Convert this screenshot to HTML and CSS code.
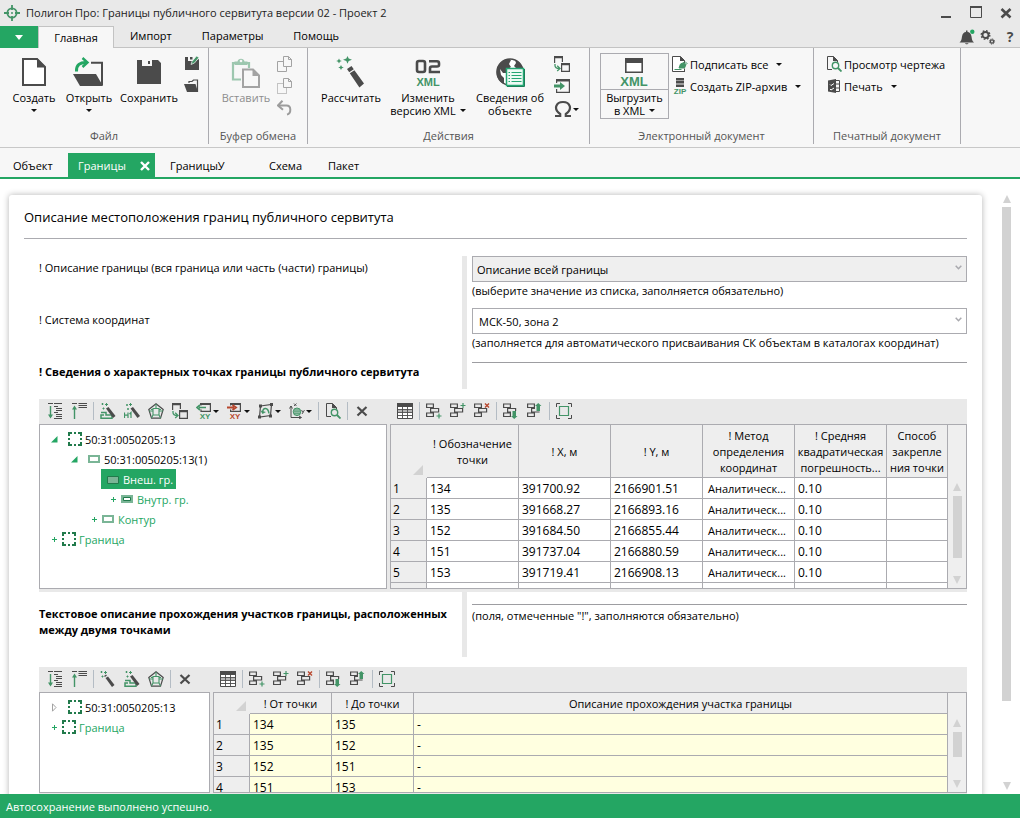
FILE: index.html
```html
<!DOCTYPE html>
<html lang="ru">
<head>
<meta charset="utf-8">
<title>Полигон Про: Границы публичного сервитута версии 02 - Проект 2</title>
<link rel="stylesheet" href="styles.css">
</head>
<body>
<svg class="sprite" aria-hidden="true">
  <symbol id="i-logo" viewBox="0 0 16 16"><circle cx="8" cy="8" r="4.6" fill="none" stroke="#439467" stroke-width="1.8"/><path d="M8 0v5M8 11v5M0 8h5M11 8h5" stroke="#439467" stroke-width="1.8"/><circle cx="8" cy="8" r="1" fill="#439467"/></symbol>
  <symbol id="i-min" viewBox="0 0 16 16"><path d="M3 11h10v2H3z" fill="#4b4b4b"/></symbol>
  <symbol id="i-max" viewBox="0 0 16 16"><path d="M2.500 1.500h11v11h-11z" fill="none" stroke="#4b4b4b"/><path d="M2 1h12v2H2z" fill="#4b4b4b"/></symbol>
  <symbol id="i-close" viewBox="0 0 16 16"><path d="M3.500 4l9 8.500M12.500 4l-9 8.500" stroke="#4b4b4b" stroke-width="2.600"/></symbol>
  <symbol id="i-bell" viewBox="0 0 16 16"><path d="M0.500 13.500c2-2 2-3 2.500-6 .5-3 2-4.500 4-4.500V1.500h1.500V3c2 0 3.500 1.500 4 4.500.5 3 .5 4 2.500 6zM6 14.200h3.500c-.5 1.500-3 1.500-3.500 0z" fill="#4b4b4b"/><circle cx="13.300" cy="2.700" r="2.200" fill="#24a663"/></symbol>
  <symbol id="i-gears" viewBox="0 0 16 16"><g fill="none" stroke="#4b4b4b"><circle cx="5.500" cy="6" r="3" stroke-width="1.800"/><circle cx="5.500" cy="6" r="4.300" stroke-width="1.400" stroke-dasharray="1.700 1.677"/><circle cx="12" cy="12.500" r="1.600" stroke-width="1.300"/><circle cx="12" cy="12.500" r="2.600" stroke-width="1" stroke-dasharray="1 1.040"/></g></symbol>

  <symbol id="i-new" viewBox="0 0 32 32"><path d="M5 3h14l8 8v18H5z" fill="#fff" stroke="#4b4b4b" stroke-width="2"/><path d="M19 2v9.500h9z" fill="#4b4b4b"/></symbol>
  <symbol id="i-open" viewBox="0 0 32 32"><path d="M18 6.700h11V29" fill="none" stroke="#4b4b4b" stroke-width="2"/><path d="M0 18h23l7 12H7z" fill="#4b4b4b"/><path d="M3.500 15.500C3 9 7 6 14 6.500" fill="none" stroke="#24a663" stroke-width="3"/><path d="M9.500 2l5 4.500-5 4.500" fill="none" stroke="#24a663" stroke-width="2.400"/></symbol>
  <symbol id="i-save" viewBox="0 0 32 32"><path d="M4 4h5v6h10V4h6l3 3v21H4z" fill="#4b4b4b"/><path d="M14 4h5v5h-5z" fill="#f7f7f7"/><path d="M15 5h2v3h-2z" fill="#4b4b4b"/></symbol>
  <symbol id="i-saveas" viewBox="0 0 16 16"><path d="M1 1h3v4h7l4-2v11H1zM6 1h2.500v2.500H6z" fill="#4b4b4b"/><path d="M7 8.500l1-3L12.500 0 15 1.500 10.500 7z" fill="#439467" stroke="#f7f7f7" stroke-width=".7"/></symbol>
  <symbol id="i-folder" viewBox="0 0 16 16"><path d="M5 5V3.500h3l1.500-1.500h4v12" fill="none" stroke="#4b4b4b" stroke-width="1.200"/><path d="M0 6h11.500l2.500 8H3z" fill="#4b4b4b"/></symbol>
  <symbol id="i-paste" viewBox="0 0 32 32"><path d="M11 23.500H3V7h16v5" fill="none" stroke="#9dc7af" stroke-width="2.200"/><path d="M4.500 9V5.500h3a3.600 3.600 0 0 1 7 0h3V9z" fill="#9dc7af"/><circle cx="11" cy="5" r="1.300" fill="#f7f7f7"/><path d="M13 13.500h10l6 6V31H13z" fill="#f7f7f7" stroke="#a3a3a3" stroke-width="2"/><path d="M22.500 13v7H30z" fill="#a3a3a3"/></symbol>
  <symbol id="i-copy" viewBox="0 0 16 16"><path d="M.5 5.500h9v10h-9z" fill="none" stroke="#a3a3a3"/><path d="M6.500.5h5l3 3v7h-8z" fill="#f7f7f7" stroke="#a3a3a3"/><path d="M11.500.5v3h3" fill="none" stroke="#a3a3a3"/></symbol>
  <symbol id="i-cut" viewBox="0 0 16 16"><path d="M.5 5.500h9v10h-9z" fill="none" stroke="#8f8f8f" stroke-dasharray="1 1"/><path d="M6.500.5h5l3 3v6h-8z" fill="#f7f7f7" stroke="#a3a3a3"/><path d="M11.500.5v3h3" fill="none" stroke="#a3a3a3"/></symbol>
  <symbol id="i-undo" viewBox="0 0 16 16"><path d="M2 5.500h7.500c5 0 5 8 .5 9" fill="none" stroke="#9c9c9c" stroke-width="2"/><path d="M5.500.8L1 5.500l5 4.200" fill="none" stroke="#9c9c9c" stroke-width="2"/></symbol>
  <symbol id="i-wand" viewBox="0 0 32 32"><path d="M12 13l4.500-3 2.300 3.200-4.600 3zM14.800 17.200l4.600-3 9.600 13.300-4.600 4z" fill="#4b4b4b"/><path d="M12.500 0l1.200 2.600 3.300 1.200-3.300 1.200-1.200 2.700-1.200-2.700L8 3.800l3.300-1.200zM4 2.500l.9 1.700 1.900.8-1.900.8L4 7.500l-.9-1.700L1.200 5l1.900-.8zM6 9l.9 1.800 1.900.7-1.900.8L6 14l-.9-1.700-1.900-.8 1.900-.7z" fill="#439467"/></symbol>
  <symbol id="i-version" viewBox="0 0 32 32"><path d="M7 5h4q2 0 2 2v7q0 2-2 2H7q-2 0-2-2V7q0-2 2-2zM17 5.200h8q2 0 2 2v1.800q0 1.500-2 1.500h-5q-2 0-2 2V16h10" fill="none" stroke="#4b4b4b" stroke-width="2.600"/><text x="16" y="30" text-anchor="middle" class="ic-xml">XML</text></symbol>
  <symbol id="i-globe" viewBox="0 0 32 32"><circle cx="16" cy="16" r="13" fill="#fff" stroke="#4b4b4b" stroke-width="1.500"/><path d="M9 5c4-3 7-2 8-1l-2 4 2 3-3 2-1 4H9l-3-4 1 6 3 3v6C3 25 2 18 3 13c1-4 3-6 6-8zM21 4c4 1 7 5 8 9h-6l-3-3 2-3z" fill="#4b4b4b"/><path d="M12.500 12.500h17v17h-17z" fill="#eefaf4" stroke="#24a673" stroke-width="1.500"/><path d="M30.500 13v17.500H13" fill="none" stroke="#1d7f59" stroke-width="1"/><path d="M14.500 16.500H16M14.500 19.500H16M14.500 22.500H16M14.500 25.500H16M17.500 16.500h10M17.500 19.500h10M17.500 22.500h10M17.500 25.500h10" stroke="#24a673" stroke-width="1.200"/></symbol>
  <symbol id="i-transfer" viewBox="0 0 16 16"><path d="M.6 7V.6h7.800V6" fill="none" stroke="#4b4b4b" stroke-width="1.200"/><path d="M0 0h9v2.200H0zM7 7h9v2.300H7z" fill="#4b4b4b"/><path d="M7.600 7.600h7.800v7.800H7.600z" fill="none" stroke="#4b4b4b" stroke-width="1.200"/><path d="M1 8v1.500q0 3 4.500 3M3.200 9.800l2.800 2.700L3.200 15" fill="none" stroke="#439467" stroke-width="1.300"/></symbol>
  <symbol id="i-import" viewBox="0 0 16 16"><path d="M2.600 5V2M2.600 11v3.400h12.800V2" fill="none" stroke="#4b4b4b" stroke-width="1.200"/><path d="M2 1h14v2.500H2z" fill="#4b4b4b"/><path d="M0 6.500h6V4l5 4-5 4V9.500H0z" fill="#439467"/></symbol>
  <symbol id="i-omega" viewBox="0 0 18 18"><path d="M1 16h5.200v-2C-1 9 2 2 9 2s10 7 2.800 12v2H17" fill="none" stroke="#4b4b4b" stroke-width="2.200"/></symbol>
  <symbol id="i-xml" viewBox="0 0 32 32"><path d="M6.800 3h16.400v13.200H6.800z" fill="#fff" stroke="#4b4b4b" stroke-width="1.600"/><path d="M6 2h18v5H6z" fill="#4b4b4b"/><text x="15" y="30" text-anchor="middle" class="ic-xml-big">XML</text></symbol>
  <symbol id="i-sign" viewBox="0 0 16 16"><path d="M13 15.500H.5V.5h8l4 4V7" fill="#fff" stroke="#4b4b4b"/><path d="M8 0v5h5z" fill="#4b4b4b"/><path d="M2.500 13.500h7" stroke="#439467"/><path d="M7 12l1.500-4 3.500-1.500 2 2L12.500 12zM13 5.500l2.500 2.500" fill="#439467" stroke="#439467"/><path d="M12.500 12.500V16" stroke="#4b4b4b"/></symbol>
  <symbol id="i-zip" viewBox="0 0 16 16"><path d="M4 0h8v2H4zM4 3h8v2H4zM4 7h8v2H4z" fill="#4b4b4b"/><path d="M4 2h8v1H4zM4 5h8v2H4z" fill="#9b9b9b"/><text x="8" y="16" text-anchor="middle" class="ic-tag">ZIP</text></symbol>
  <symbol id="i-preview" viewBox="0 0 16 16"><path d="M6 13.500H1.500V.5h6l4 4V6" fill="none" stroke="#4b4b4b"/><path d="M7 0v5h5z" fill="#4b4b4b"/><circle cx="9.500" cy="9.500" r="3.200" fill="none" stroke="#439467" stroke-width="1.400"/><path d="M12 12l3.500 3.500" stroke="#439467" stroke-width="1.800"/></symbol>
  <symbol id="i-print" viewBox="0 0 16 16"><path d="M9 2.500h4.500v11H9M9 6h4M9 10h4" fill="none" stroke="#4b4b4b"/><path d="M2 2.500L10 1v14l-8-1.500z" fill="#4b4b4b"/><path d="M4 6.500l1 1 3-2M4 11l1 1 3-2" fill="none" stroke="#fff"/></symbol>

  <symbol id="i-down" viewBox="0 0 16 16"><path d="M1 .5h5M7 .5h8M7 3.500h4M9 5.500h6M9 7.500h6M7 9.500h4M9 11.500h6M9 13.500h6M7 15.500h8" stroke="#4b4b4b"/><path d="M3.500 3v11" stroke="#439467" stroke-width="1.400"/><path d="M1 11.500l2.500 4 2.500-4z" fill="#439467"/></symbol>
  <symbol id="i-up" viewBox="0 0 16 16"><path d="M1 .5h5M7.500.5H16M7.500 2.500h8.500M7.500 4.500h8.500" stroke="#4b4b4b"/><path d="M3.500 5v11" stroke="#439467" stroke-width="1.400"/><path d="M1 6.500l2.500-4 2.500 4z" fill="#439467"/></symbol>
  <symbol id="i-swand" viewBox="0 0 16 16"><path d="M5.500 7L8 5.500l6.500 8.500-2.500 2z" fill="#4b4b4b"/><path d="M4.500 5.500l2-1.500" stroke="#4b4b4b" stroke-width="1.500"/><path d="M5.500 0v3M4 1.500h3M1.500 0v2M.5 1h2M2.500 4.500v2M1.500 5.500h2" stroke="#439467"/></symbol>
  <symbol id="i-wandshape" viewBox="0 0 16 16"><path d="M1 9.500h5v2.500h6v3.200H1v-3.200h3" fill="none" stroke="#439467" stroke-width="1.500"/><path d="M6 5.500L8.500 4 15.500 13 13 15z" fill="#4b4b4b"/><path d="M6.500 0v3M5 1.500h3M2.500 0v2M1.500 1h2M3.500 4.500v2M2.500 5.500h2" stroke="#439467"/></symbol>
  <symbol id="i-wandnum" viewBox="0 0 16 16"><path d="M.5 9.500V15M4 9.500V15M.5 12.200H4M5.500 11l1.500-1.500V15" fill="none" stroke="#439467" stroke-width="1.200"/><path d="M6.500 5.500L9 4 16 13l-2.500 2z" fill="#4b4b4b"/><path d="M6.500 0v3M5 1.500h3M3 1v2M2 2h2M4 5v2M3 6h2" stroke="#439467"/></symbol>
  <symbol id="i-penta" viewBox="0 0 16 16"><path d="M8 .8l7.200 5.700-2.700 8.700h-9L.8 6.500z" fill="none" stroke="#4b4b4b" stroke-width="1.200"/><path d="M5 5.500h6V12H5zM8 1v4.500M5 8h-4M11 8h4M5 12l-1.500 3M11 12l1.500 3M3 6.500h2M11 6.500h2" fill="none" stroke="#439467" stroke-width="1.100"/></symbol>
  <symbol id="i-xyin" viewBox="0 0 16 16"><path d="M5 2.600V.6h9.400v7.800H5V6.500" fill="none" stroke="#4b4b4b" stroke-width="1.200"/><path d="M4 0h11v2H4z" fill="#4b4b4b"/><path d="M10 4.500H3M4 2L1 4.500 4 7" fill="none" stroke="#439467" stroke-width="1.700"/><text x="9" y="16" text-anchor="middle" class="ic-tag">XY</text></symbol>
  <symbol id="i-xyout" viewBox="0 0 16 16"><path d="M3.600 2.500V.6h9.800v7.800H3.600V6.500" fill="none" stroke="#4b4b4b" stroke-width="1.200"/><path d="M3 0h11v2H3z" fill="#4b4b4b"/><path d="M0 4.500h7M5.500 2L9 4.500 5.500 7" fill="none" stroke="#b8482f" stroke-width="1.900"/><text x="8" y="16" text-anchor="middle" class="ic-tag ic-red">XY</text></symbol>
  <symbol id="i-rotate" viewBox="0 0 16 16"><path d="M2.500 3l11-1.500-1 11L1.500 14z" fill="none" stroke="#4b4b4b" stroke-width="1.200"/><path d="M1 1.500h3v3H1zM12 0h3v3h-3zM11 11.500h3v3h-3zM0 12.500h3v3H0z" fill="#4b4b4b"/><path d="M4.500 9.500C5 4 10 4 11 10.500" fill="none" stroke="#439467" stroke-width="1.500"/><path d="M2.500 7.500l2 3.500 3.500-2z" fill="#439467"/></symbol>
  <symbol id="i-axes" viewBox="0 0 16 16"><path d="M2 3v11.500h10M.5 5.500L2 3l1.500 2.500M10 13l2.500 1.500L10 16" fill="none" stroke="#4b4b4b"/><path d="M5 .5l2.500 2.500M7.500.5L5 3M12.500 7l1.500 2.500M15.500 7L13 11" stroke="#4b4b4b" stroke-width=".9"/><circle cx="8" cy="8.800" r="3.800" fill="none" stroke="#439467"/><path d="M8 5v7.600M4.200 8.800h7.600M6 5.500v6.600M10 5.500v6.600M5 7h6M5 10.700h6" stroke="#439467" stroke-width=".8"/></symbol>
  <symbol id="i-x" viewBox="0 0 16 16"><path d="M3.500 4l9 8.500M12.500 4l-9 8.500" stroke="#4b4b4b" stroke-width="2.200"/></symbol>
  <symbol id="i-table" viewBox="0 0 16 16"><path d="M.5.500h15v15H.5z" fill="#fff" stroke="#4b4b4b"/><path d="M0 0h16v4H0z" fill="#4b4b4b"/><path d="M1 7h14v2H1z" fill="#b5b5b5"/><path d="M5.500 3v13M10.500 3v13M0 6.500h16M0 9.500h16M0 12.500h16" stroke="#4b4b4b" stroke-width=".9"/></symbol>
  <symbol id="i-rows" viewBox="0 0 16 16"><path d="M.6 1h6.800v3.500H.6zM.6 10h6.800v3.500H.6zM4.600 5.500h8v3.500h-8z" fill="none" stroke="#4b4b4b" stroke-width="1.200"/></symbol>
  <symbol id="i-rowbelow" viewBox="0 0 16 16"><use href="#i-rows"/><path d="M13 10.500v5M10.500 13h5" stroke="#439467" stroke-width="1.200"/></symbol>
  <symbol id="i-rowabove" viewBox="0 0 16 16"><use href="#i-rows"/><path d="M13 0v5M10.500 2.500h5" stroke="#439467" stroke-width="1.200"/></symbol>
  <symbol id="i-rowdel" viewBox="0 0 16 16"><use href="#i-rows"/><path d="M11 .5l4 4M15 .5l-4 4" stroke="#b8482f" stroke-width="1.400"/></symbol>
  <symbol id="i-rowdown" viewBox="0 0 16 16"><path d="M.6 1h6.800v3.500H.6zM.6 10h6.800v3.500H.6zM8 9H4.600V5.500h8V8" fill="none" stroke="#4b4b4b" stroke-width="1.200"/><path d="M9.500 8h3.500v5h1.500l-3.300 3L8 13h1.500z" fill="#439467"/></symbol>
  <symbol id="i-rowup" viewBox="0 0 16 16"><path d="M.6 1h6.800v3.500H.6zM.6 10h6.800v3.500H.6zM8 5.500H4.600V9h8" fill="none" stroke="#4b4b4b" stroke-width="1.200"/><path d="M9.500 8h3.500V3h1.500L11.200 0 8 3h1.500z" fill="#439467"/></symbol>
  <symbol id="i-full" viewBox="0 0 16 16"><path d="M.5 4V.5H4M12 .5h3.500V4M15.500 12v3.500H12M4 15.500H.5V12" fill="none" stroke="#4b4b4b"/><path d="M3.500 3.500h9v9h-9z" fill="none" stroke="#439467" stroke-width="1.200"/></symbol>

  <symbol id="t-dash" viewBox="0 0 14 14"><path d="M1 4V1h3M6 1h2M10 1h3v3M13 6v2M13 10v3h-3M8 13H6M4 13H1v-3M1 8V6" fill="none" stroke="#217a4b" stroke-width="2"/></symbol>
  <symbol id="t-rect" viewBox="0 0 12 8"><path d="M1 1h10v6H1z" fill="#fff" stroke="#7ab596" stroke-width="2"/></symbol>
  <symbol id="t-solid" viewBox="0 0 12 8"><path d="M.5.500h11v7H.5z" fill="#7ab596" stroke="#217a4b"/></symbol>
  <symbol id="t-inner" viewBox="0 0 12 8"><path d="M0 0h12v8H0z" fill="#7ab596"/><path d="M2.500 2.500h7v3h-7z" fill="#fff" stroke="#217a4b"/></symbol>
  <symbol id="t-open" viewBox="0 0 7 7"><path d="M6.500 0v6.500H0z" fill="#24a663"/></symbol>
  <symbol id="t-closed" viewBox="0 0 7 9"><path d="M1.500.8v7.400L5 4.500z" fill="#fff" stroke="#a3a3a3"/></symbol>
  <symbol id="t-plus" viewBox="0 0 7 7"><path d="M3.500 1v5M1 3.500h5" stroke="#24a663" stroke-width="1"/></symbol>
  <symbol id="s-up" viewBox="0 0 8 8"><path d="M4 0l4 8H0z" fill="#d2d2d2"/></symbol>
  <symbol id="s-down" viewBox="0 0 8 8"><path d="M4 8l4-8H0z" fill="#d2d2d2"/></symbol>
  <symbol id="s-chev" viewBox="0 0 7 5"><path d="M.7.700l2.800 3L6.300.7" fill="none" stroke="#a9a9ae" stroke-width="1.500"/></symbol>
</svg>

<div class="app">
  <header class="titlebar">
    <svg class="ic16"><use href="#i-logo"/></svg>
    <h1 class="app-title">Полигон Про: Границы публичного сервитута версии 02 - Проект 2</h1>
    <div class="window-controls">
      <button class="plain" aria-label="Свернуть"><svg class="ic16"><use href="#i-min"/></svg></button>
      <button class="plain" aria-label="Развернуть"><svg class="ic16"><use href="#i-max"/></svg></button>
      <button class="plain" aria-label="Закрыть"><svg class="ic16"><use href="#i-close"/></svg></button>
    </div>
  </header>

  <nav class="menubar">
    <button class="menu-main" aria-label="Меню"><span class="caret caret-white"></span></button>
    <button class="menu-tab menu-active">Главная</button>
    <button class="menu-tab">Импорт</button>
    <button class="menu-tab">Параметры</button>
    <button class="menu-tab">Помощь</button>
    <div class="menu-tools">
      <button class="plain" aria-label="Уведомления"><svg class="ic16"><use href="#i-bell"/></svg></button>
      <button class="plain" aria-label="Настройки"><svg class="ic16"><use href="#i-gears"/></svg></button>
      <button class="plain help">?</button>
    </div>
  </nav>

  <div class="ribbon">
    <section class="group g-file">
      <div class="group-body">
        <button class="big w-create"><svg class="ic32"><use href="#i-new"/></svg><span>Создать</span><span class="caret caret-row"></span></button>
        <button class="big w-open"><svg class="ic32"><use href="#i-open"/></svg><span>Открыть</span><span class="caret caret-row"></span></button>
        <button class="big w-save"><svg class="ic32"><use href="#i-save"/></svg><span>Сохранить</span></button>
        <div class="smalls">
          <button class="plain" aria-label="Сохранить как"><svg class="ic16"><use href="#i-saveas"/></svg></button>
          <button class="plain" aria-label="Открыть папку"><svg class="ic16"><use href="#i-folder"/></svg></button>
        </div>
      </div>
      <div class="group-name">Файл</div>
    </section>
    <section class="group g-clip">
      <div class="group-body">
        <button class="big w-paste" disabled><svg class="ic32"><use href="#i-paste"/></svg><span>Вставить</span></button>
        <div class="smalls">
          <button class="plain" aria-label="Копировать"><svg class="ic16"><use href="#i-copy"/></svg></button>
          <button class="plain" aria-label="Вырезать"><svg class="ic16"><use href="#i-cut"/></svg></button>
          <button class="plain" aria-label="Отменить"><svg class="ic16"><use href="#i-undo"/></svg></button>
        </div>
      </div>
      <div class="group-name">Буфер обмена</div>
    </section>
    <section class="group g-act">
      <div class="group-body">
        <button class="big w-calc"><svg class="ic32"><use href="#i-wand"/></svg><span>Рассчитать</span></button>
        <button class="big w-ver"><svg class="ic32"><use href="#i-version"/></svg><span>Изменить</span><span class="with-caret">версию XML <span class="caret"></span></span></button>
        <button class="big w-info"><svg class="ic32"><use href="#i-globe"/></svg><span>Сведения об</span><span>объекте</span></button>
        <div class="smalls">
          <button class="plain" aria-label="Перенести"><svg class="ic16"><use href="#i-transfer"/></svg></button>
          <button class="plain" aria-label="Импорт"><svg class="ic16"><use href="#i-import"/></svg></button>
          <button class="plain with-caret" aria-label="Символ"><svg class="ic18"><use href="#i-omega"/></svg><span class="caret"></span></button>
        </div>
      </div>
      <div class="group-name">Действия</div>
    </section>
    <section class="group g-edoc">
      <div class="group-body">
        <button class="big big-framed"><svg class="ic32"><use href="#i-xml"/></svg><span class="framed-label"><span>Выгрузить</span><span class="with-caret">в XML <span class="caret"></span></span></span></button>
        <div class="lines">
          <button class="line"><svg class="ic16"><use href="#i-sign"/></svg><span class="line-text">Подписать все</span><span class="caret"></span></button>
          <button class="line"><svg class="ic16"><use href="#i-zip"/></svg><span class="line-text">Создать ZIP-архив</span><span class="caret"></span></button>
        </div>
      </div>
      <div class="group-name">Электронный документ</div>
    </section>
    <section class="group g-print">
      <div class="group-body">
        <div class="lines">
          <button class="line"><svg class="ic16"><use href="#i-preview"/></svg><span class="line-text">Просмотр чертежа</span></button>
          <button class="line"><svg class="ic16"><use href="#i-print"/></svg><span class="line-text">Печать</span><span class="caret"></span></button>
        </div>
      </div>
      <div class="group-name">Печатный документ</div>
    </section>
  </div>

  <nav class="doctabs">
    <button class="doctab t1">Объект</button>
    <button class="doctab t2 doctab-active"><span>Границы</span><svg class="tabx" viewBox="0 0 10 10"><path d="M1 1l8 8M9 1L1 9" stroke="#fff" stroke-width="2.400"/></svg></button>
    <button class="doctab t3">ГраницыУ</button>
    <button class="doctab t4">Схема</button>
    <button class="doctab t5">Пакет</button>
  </nav>

  <main class="workspace">
    <div class="card">
      <h2 class="card-title">Описание местоположения границ публичного сервитута</h2>

      <div class="form">
        <div class="form-row">
          <label class="form-label" for="border-kind">! Описание границы (вся граница или часть (части) границы)</label>
          <div class="form-field">
            <div class="select-wrap"><select id="border-kind" class="select select-gray"><option>Описание всей границы</option></select><svg class="chev"><use href="#s-chev"/></svg></div>
            <p class="hint">(выберите значение из списка, заполняется обязательно)</p>
          </div>
        </div>
        <div class="form-row">
          <label class="form-label" for="coord-system">! Система координат</label>
          <div class="form-field">
            <div class="select-wrap"><select id="coord-system" class="select"><option>МСК-50, зона 2</option></select><svg class="chev"><use href="#s-chev"/></svg></div>
            <p class="hint">(заполняется для автоматического присваивания СК объектам в каталогах координат)</p>
          </div>
        </div>
        <div class="form-row form-row-short">
          <h3 class="form-label bold">! Сведения о характерных точках границы публичного сервитута</h3>
          <div class="form-field"><hr class="rule"></div>
        </div>
      </div>

      <div class="panel panel-points">
        <div class="pane pane-tree">
          <div class="toolbar">
            <button class="tool" aria-label="Вниз"><svg class="ic16"><use href="#i-down"/></svg></button>
            <button class="tool" aria-label="Вверх"><svg class="ic16"><use href="#i-up"/></svg></button>
            <span class="sep"></span>
            <button class="tool" aria-label="Рассчитать контур"><svg class="ic16"><use href="#i-wandshape"/></svg></button>
            <button class="tool" aria-label="Нумерация"><svg class="ic16"><use href="#i-wandnum"/></svg></button>
            <button class="tool" aria-label="Полигон"><svg class="ic16"><use href="#i-penta"/></svg></button>
            <button class="tool" aria-label="Перенести"><svg class="ic16"><use href="#i-transfer"/></svg></button>
            <button class="tool tool-menu" aria-label="Импорт координат"><svg class="ic16"><use href="#i-xyin"/></svg><span class="caret"></span></button>
            <button class="tool tool-menu" aria-label="Экспорт координат"><svg class="ic16"><use href="#i-xyout"/></svg><span class="caret"></span></button>
            <button class="tool tool-menu" aria-label="Направление обхода"><svg class="ic16"><use href="#i-rotate"/></svg><span class="caret"></span></button>
            <button class="tool tool-menu" aria-label="Система координат"><svg class="ic16"><use href="#i-axes"/></svg><span class="caret"></span></button>
            <span class="sep"></span>
            <button class="tool" aria-label="Просмотр"><svg class="ic16"><use href="#i-preview"/></svg></button>
            <span class="sep"></span>
            <button class="tool" aria-label="Удалить"><svg class="ic16"><use href="#i-x"/></svg></button>
          </div>
          <ul class="box tree">
            <li class="node"><svg class="mark"><use href="#t-open"/></svg><svg class="ic14"><use href="#t-dash"/></svg><span>50:31:0050205:13</span></li>
            <li class="node lvl1"><svg class="mark"><use href="#t-open"/></svg><svg class="ic12"><use href="#t-rect"/></svg><span>50:31:0050205:13(1)</span></li>
            <li class="node lvl2"><span class="picked"><svg class="ic12"><use href="#t-solid"/></svg><span>Внеш. гр.</span></span></li>
            <li class="node add lvl3"><svg class="mark"><use href="#t-plus"/></svg><svg class="ic12"><use href="#t-inner"/></svg><span>Внутр. гр.</span></li>
            <li class="node add lvl2b"><svg class="mark"><use href="#t-plus"/></svg><svg class="ic12"><use href="#t-rect"/></svg><span>Контур</span></li>
            <li class="node add"><svg class="mark"><use href="#t-plus"/></svg><svg class="ic14"><use href="#t-dash"/></svg><span>Граница</span></li>
          </ul>
        </div>
        <div class="pane pane-grid">
          <div class="toolbar">
            <button class="tool" aria-label="Таблица"><svg class="ic16"><use href="#i-table"/></svg></button>
            <span class="sep"></span>
            <button class="tool" aria-label="Строка ниже"><svg class="ic16"><use href="#i-rowbelow"/></svg></button>
            <button class="tool" aria-label="Строка выше"><svg class="ic16"><use href="#i-rowabove"/></svg></button>
            <button class="tool" aria-label="Удалить строку"><svg class="ic16"><use href="#i-rowdel"/></svg></button>
            <span class="sep"></span>
            <button class="tool" aria-label="Сдвинуть вниз"><svg class="ic16"><use href="#i-rowdown"/></svg></button>
            <button class="tool" aria-label="Сдвинуть вверх"><svg class="ic16"><use href="#i-rowup"/></svg></button>
            <span class="sep"></span>
            <button class="tool" aria-label="Развернуть таблицу"><svg class="ic16"><use href="#i-full"/></svg></button>
          </div>
          <div class="box gridbox">
            <table class="grid">
              <colgroup><col class="c-num"><col class="c-pt"><col class="c-pt"><col class="c-pt"><col class="c-pt"><col class="c-pt"><col></colgroup>
              <thead>
                <tr class="tall"><th class="corner"><svg class="ic10" viewBox="0 0 10 10"><path d="M10 0v10H0z" fill="#d2d2d2"/></svg></th><th>! Обозначение<br>точки</th><th>! X, м</th><th>! Y, м</th><th>! Метод<br>определения<br>координат</th><th>! Средняя<br>квадратическая<br>погрешность...</th><th>Способ<br>закрепле<br>ния точки</th></tr>
              </thead>
              <tbody>
                <tr><th>1</th><td>134</td><td>391700.92</td><td>2166901.51</td><td class="word">Аналитическ...</td><td>0.10</td><td></td></tr>
                <tr><th>2</th><td>135</td><td>391668.27</td><td>2166893.16</td><td class="word">Аналитическ...</td><td>0.10</td><td></td></tr>
                <tr><th>3</th><td>152</td><td>391684.50</td><td>2166855.44</td><td class="word">Аналитическ...</td><td>0.10</td><td></td></tr>
                <tr><th>4</th><td>151</td><td>391737.04</td><td>2166880.59</td><td class="word">Аналитическ...</td><td>0.10</td><td></td></tr>
                <tr><th>5</th><td>153</td><td>391719.41</td><td>2166908.13</td><td class="word">Аналитическ...</td><td>0.10</td><td></td></tr>
                <tr><th></th><td></td><td></td><td></td><td></td><td></td><td></td></tr>
              </tbody>
            </table>
            <div class="gscroll gscroll-tall"><svg class="arrow"><use href="#s-up"/></svg><div class="track"><div class="thumb thumb-points"></div></div><svg class="arrow"><use href="#s-down"/></svg></div>
          </div>
        </div>
      </div>

      <div class="form form-between">
        <div class="form-row form-row-text">
          <h3 class="form-label bold">Текстовое описание прохождения участков границы, расположенных между двумя точками</h3>
          <div class="form-field"><hr class="rule"><p class="hint">(поля, отмеченные "!", заполняются обязательно)</p></div>
        </div>
      </div>

      <div class="panel panel-text">
        <div class="pane pane-tree">
          <div class="toolbar">
            <button class="tool" aria-label="Вниз"><svg class="ic16"><use href="#i-down"/></svg></button>
            <button class="tool" aria-label="Вверх"><svg class="ic16"><use href="#i-up"/></svg></button>
            <span class="sep"></span>
            <button class="tool" aria-label="Рассчитать"><svg class="ic16"><use href="#i-swand"/></svg></button>
            <button class="tool" aria-label="Рассчитать контур"><svg class="ic16"><use href="#i-wandshape"/></svg></button>
            <button class="tool" aria-label="Полигон"><svg class="ic16"><use href="#i-penta"/></svg></button>
            <span class="sep"></span>
            <button class="tool" aria-label="Удалить"><svg class="ic16"><use href="#i-x"/></svg></button>
          </div>
          <ul class="box tree">
            <li class="node"><svg class="mark mark-closed"><use href="#t-closed"/></svg><svg class="ic14"><use href="#t-dash"/></svg><span>50:31:0050205:13</span></li>
            <li class="node add"><svg class="mark"><use href="#t-plus"/></svg><svg class="ic14"><use href="#t-dash"/></svg><span>Граница</span></li>
          </ul>
        </div>
        <div class="pane pane-grid">
          <div class="toolbar">
            <button class="tool" aria-label="Таблица"><svg class="ic16"><use href="#i-table"/></svg></button>
            <span class="sep"></span>
            <button class="tool" aria-label="Строка ниже"><svg class="ic16"><use href="#i-rowbelow"/></svg></button>
            <button class="tool" aria-label="Строка выше"><svg class="ic16"><use href="#i-rowabove"/></svg></button>
            <button class="tool" aria-label="Удалить строку"><svg class="ic16"><use href="#i-rowdel"/></svg></button>
            <span class="sep"></span>
            <button class="tool" aria-label="Сдвинуть вниз"><svg class="ic16"><use href="#i-rowdown"/></svg></button>
            <button class="tool" aria-label="Сдвинуть вверх"><svg class="ic16"><use href="#i-rowup"/></svg></button>
            <span class="sep"></span>
            <button class="tool" aria-label="Развернуть таблицу"><svg class="ic16"><use href="#i-full"/></svg></button>
          </div>
          <div class="box gridbox">
            <table class="grid grid-yellow">
              <colgroup><col class="c-num"><col class="c-seg"><col class="c-seg"><col></colgroup>
              <thead>
                <tr><th class="corner"><svg class="ic10" viewBox="0 0 10 10"><path d="M10 0v10H0z" fill="#d2d2d2"/></svg></th><th>! От точки</th><th>! До точки</th><th>Описание прохождения участка границы</th></tr>
              </thead>
              <tbody>
                <tr><th>1</th><td>134</td><td>135</td><td>-</td></tr>
                <tr><th>2</th><td>135</td><td>152</td><td>-</td></tr>
                <tr><th>3</th><td>152</td><td>151</td><td>-</td></tr>
                <tr><th>4</th><td>151</td><td>153</td><td>-</td></tr>
              </tbody>
            </table>
            <div class="gscroll"><svg class="arrow"><use href="#s-up"/></svg><div class="track"><div class="thumb thumb-text"></div></div><svg class="arrow"><use href="#s-down"/></svg></div>
          </div>
        </div>
      </div>
    </div>
    <div class="mainscroll"><svg class="arrow"><use href="#s-up"/></svg><div class="track"><div class="thumb thumb-main"></div></div><svg class="arrow"><use href="#s-down"/></svg></div>
  </main>

  <footer class="status">Автосохранение выполнено успешно.</footer>
</div>
</body>
</html>
```
FILE: styles.css
```css
* { box-sizing: border-box; }
body { margin: 0; font: 11px/16px "Open Sans", "Noto Sans", sans-serif; color: #000; background: #fff; }
h1, h2, h3, p, ul { margin: 0; padding: 0; font: inherit; list-style: none; }
button { font: inherit; color: inherit; background: none; border: 0; padding: 0; margin: 0; white-space: nowrap; }
svg { display: block; flex: none; }
.sprite { display: none; }
.ic16 { width: 16px; height: 16px; }
.ic18 { width: 18px; height: 18px; }
.ic32 { width: 32px; height: 32px; }
.ic14 { width: 14px; height: 14px; }
.ic12 { width: 12px; height: 8px; }
.ic10 { width: 10px; height: 10px; }
.plain { display: flex; }
.caret { flex: none; display: inline-block; border: 3px solid transparent; border-top-color: #111; border-bottom: 0; }
.caret-white { border-width: 5px 4px 0; border-top-color: #fff; }
.with-caret { display: flex; align-items: center; gap: 4px; }

.ic-xml { font: bold 11px "Liberation Sans", sans-serif; fill: #439467; }
.ic-xml-big { font: bold 13px "Liberation Sans", sans-serif; fill: #439467; }
.ic-tag { font: bold 8px "Liberation Sans", sans-serif; fill: #439467; }
.ic-red { fill: #b8482f; }

.app { display: flex; flex-direction: column; height: 100vh; overflow: hidden; }
.titlebar { display: flex; align-items: center; height: 26px; padding: 0 6px 0 4px; gap: 6px; background: #e9e9e9; flex: none; }
.app-title { flex: 1; color: #222; white-space: nowrap; }
.window-controls { display: flex; gap: 14px; }

.menubar { display: flex; height: 22px; background: #e9e9e9; border-bottom: 1px solid #c3c3c3; flex: none; }
.menu-main { width: 38px; height: 22px; background: #24a663; display: flex; align-items: center; justify-content: center; }
.menu-tab { padding: 0 15px 1px; }
.menu-active { width: 76px; height: 22px; padding: 0; background: #f7f7f7; border: 1px solid #c3c3c3; border-bottom: 0; margin-right: 1px; }
.menu-tools { margin-left: auto; display: flex; align-items: center; gap: 5px; padding-right: 4px; }
.help { width: 12px; justify-content: center; font-weight: bold; font-size: 14px; color: #4b4b4b; margin-left: 3px; }

.ribbon { display: flex; height: 100px; background: #f7f7f7; border-bottom: 1px solid #c8c8c8; flex: none; }
.group { height: 96px; border-right: 1px solid #ababb0; display: flex; flex-direction: column; }
.group-body { display: flex; flex: 1; padding-top: 8px; align-items: flex-start; }
.group-name { text-align: center; color: #555; height: 16px; white-space: nowrap; }
.big { display: flex; flex-direction: column; align-items: center; line-height: 13px; }
.big .ic32 { margin-bottom: 3px; }
.big:disabled { color: #8d8d8d; }
.caret-row { margin-top: 5px; }
.smalls { display: flex; flex-direction: column; gap: 6px; }
.lines { display: flex; flex-direction: column; gap: 6px; }
.line { display: flex; align-items: center; gap: 2px; height: 16px; }
.line .caret { margin-left: 6px; }
.line-text { padding-top: 2px; }

.g-file { width: 209px; }
.g-file .group-body { padding-left: 8px; gap: 1px; }
.g-file .smalls { padding-left: 3px; }
.w-create { width: 52px; }
.w-open { width: 56px; }
.w-save { width: 62px; }
.g-clip { width: 99px; }
.g-clip .group-body { padding-left: 11px; gap: 5px; }
.w-paste { width: 52px; }
.g-act { width: 282px; }
.g-act .group-body { padding-left: 11px; gap: 4px; }
.g-act .smalls { padding-left: 3px; }
.g-act .smalls .with-caret { gap: 1px; }
.w-calc { width: 64px; }
.w-ver { width: 82px; }
.w-info { width: 74px; }
.g-edoc { width: 224px; }
.g-edoc .group-body { padding: 5px 0 0 10px; gap: 3px; }
.g-edoc .lines { padding-top: 3px; }
.g-print { width: 147px; }
.g-print .group-body { padding-left: 12px; }
.big-framed { width: 69px; border: 1px solid #ababb0; padding-top: 2px; }
.big-framed .ic32 { margin-bottom: 1px; }
.framed-label { width: 100%; border-top: 1px solid #ababb0; display: flex; flex-direction: column; align-items: center; padding: 1px 0; }

.doctabs { display: flex; align-items: flex-end; height: 31px; background: #f7f7f7; border-bottom: 2px solid #24a663; flex: none; }
.doctab { height: 24px; text-align: left; padding: 1px 0 0 13px; }
.t1 { width: 68px; }
.t2 { width: 87px; }
.t3 { width: 99px; padding-left: 15px; }
.t4 { width: 59px; padding-left: 15px; }
.t5 { padding-left: 15px; }
.doctab-active { background: #24a663; color: #fff; display: flex; align-items: center; justify-content: space-between; padding: 1px 5px 0 10px; }
.tabx { width: 10px; height: 10px; }

.workspace { flex: 1; min-height: 0; display: flex; background: #fff; overflow: hidden; }
.card { flex: 1; min-width: 0; margin: 16px 0 0 9px; padding: 0 15px; border-radius: 3px 3px 0 0; box-shadow: 0 0 6px rgba(0, 0, 0, .3); height: 700px; background: #fff; }
.card-title { font-size: 13px; line-height: 20px; padding: 12px 0 11px; border-bottom: 1px solid #ababb0; }

.mainscroll { width: 38px; padding: 16px 0 4px 11px; display: flex; flex-direction: column; align-items: center; gap: 4px; }
.arrow { width: 8px; height: 8px; }
.track { flex: 1; width: 9px; min-height: 0; }
.thumb { width: 9px; background: #d2d2d2; }
.thumb-main { height: 494px; }
.thumb-points { height: 62px; }
.thumb-text { height: 25px; }

.form { padding: 17px 0 0 15px; }
.form-row { display: grid; grid-template-columns: 423px minmax(0, 1fr); height: 52px; }
.form-row-short { height: 29px; }
.form-row-text { height: 65px; }
.form-label { padding: 4px 0; }
.bold { font-weight: bold; }
.form-field { border-left: 5px solid #e8e8e8; padding-left: 5px; }
.select-wrap { position: relative; }
.select { display: block; width: 100%; height: 26px; appearance: none; font: inherit; color: #000; background: #fff; border: 1px solid #ababb0; border-radius: 0; padding: 1px 20px 0 6px; }
.select-gray { background: #efefef; padding-left: 4px; }
.chev { position: absolute; right: 5px; top: 9px; width: 7px; height: 5px; }
.hint { padding-top: 1px; white-space: nowrap; }
.rule { border: 0; height: 1px; margin: 2px 0 0; background: #9d9da1; }
.form-row-text .rule { margin-top: 12px; margin-bottom: 2px; }
.form-between { padding-top: 0; }
.form-row-text .form-label { padding: 14px 0 0; }

.panel { display: flex; gap: 3px; margin: 10px 0 0 15px; padding-bottom: 3px; background: #e9e9e9; }
.pane { display: flex; flex-direction: column; }
.pane-grid { flex: 1; min-width: 0; }
.panel-points .pane-tree { width: 348px; }
.panel-text .pane-tree { width: 171px; }
.toolbar { display: flex; align-items: center; height: 25px; padding: 0 0 1px 4px; }
.pane-grid .toolbar { padding-left: 3px; }
.tool { width: 24px; height: 24px; display: flex; align-items: center; justify-content: center; }
.tool-menu { width: 31px; justify-content: flex-start; padding-left: 4px; gap: 1px; }
.sep { width: 1px; height: 18px; background: #b4bcc4; margin: 0 2px; }
.box { border: 1px solid #ababb0; background: #fff; overflow: hidden; }
.panel-points .box { height: 165px; }
.panel-text .box { height: 101px; }

.tree { padding: 4px 0 0 11px; }
.node { display: flex; align-items: center; height: 20px; white-space: nowrap; }
.node span:last-child { padding-top: 1px; }
.node .mark { width: 7px; height: 7px; margin-right: 10px; }
.node .mark-closed { height: 9px; }
.node .ic14 { margin-right: 3px; }
.node .ic12 { margin-right: 4px; }
.add { color: #24a663; }
.add .mark { margin-right: 4px; }
.lvl1 { padding-left: 20px; }
.lvl2 { padding-left: 50px; }
.lvl2b { padding-left: 40px; }
.lvl3 { padding-left: 59px; }
.picked { display: flex; align-items: center; height: 20px; padding: 0 3px 0 6px; background: #24a663; color: #fff; }

.gridbox { display: flex; background: #efefef; }
.grid { flex: 1; min-width: 0; width: 0; table-layout: fixed; border-collapse: separate; border-spacing: 0; align-self: flex-start; }
.c-num { width: 36px; }
.c-pt { width: 92px; }
.c-seg { width: 82px; }
.grid th, .grid td { height: 21px; padding: 2px 0 0 3px; border-right: 1px solid #ababb0; border-bottom: 1px solid #ababb0; font-size: 12px; font-weight: normal; white-space: nowrap; text-align: left; overflow: hidden; }
.grid th { background: #eee; }
.grid tbody th { padding-left: 2px; }
.grid td { background: #fff; }
.grid-yellow td { background: #ffffe0; }
.grid .word { padding-left: 5px; font-size: 11px; }
.grid thead th { padding: 1px 0 0; text-align: center; font-size: 11px; }
.grid .tall th { height: 53px; }
.grid .corner { border-color: #eee; vertical-align: bottom; }
.corner .ic10 { margin: 0 3px 2px auto; }
.gscroll { width: 18px; padding: 26px 0 4px; display: flex; flex-direction: column; align-items: center; gap: 5px; }
.gscroll-tall { padding-top: 58px; }

.status { flex: none; height: 24px; padding: 0 6px; line-height: 25px; background: #24a663; color: #fff; }
```
